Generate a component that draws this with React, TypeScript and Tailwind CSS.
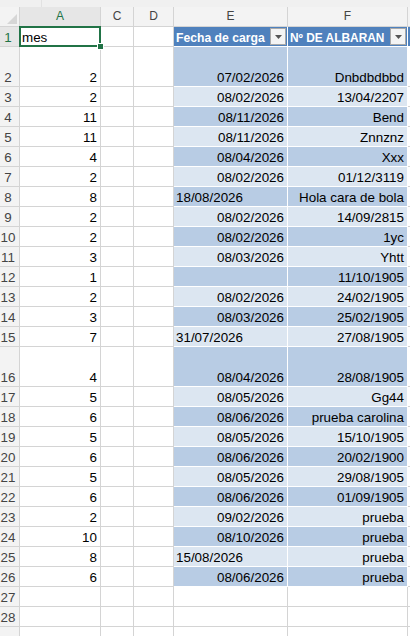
import React from 'react';

type Row = { n: number; a?: string; e?: string; eLeft?: boolean; f?: string; tall?: boolean; hideLabel?: boolean };

const rows: Row[] = [
  { n: 2, a: '2', e: '07/02/2026', f: 'Dnbdbdbbd', tall: true },
  { n: 3, a: '2', e: '08/02/2026', f: '13/04/2207' },
  { n: 4, a: '11', e: '08/11/2026', f: 'Bend' },
  { n: 5, a: '11', e: '08/11/2026', f: 'Znnznz' },
  { n: 6, a: '4', e: '08/04/2026', f: 'Xxx' },
  { n: 7, a: '2', e: '08/02/2026', f: '01/12/3119' },
  { n: 8, a: '8', e: '18/08/2026', eLeft: true, f: 'Hola cara de bola' },
  { n: 9, a: '2', e: '08/02/2026', f: '14/09/2815' },
  { n: 10, a: '2', e: '08/02/2026', f: '1yc' },
  { n: 11, a: '3', e: '08/03/2026', f: 'Yhtt' },
  { n: 12, a: '1', e: '', f: '11/10/1905' },
  { n: 13, a: '2', e: '08/02/2026', f: '24/02/1905' },
  { n: 14, a: '3', e: '08/03/2026', f: '25/02/1905' },
  { n: 15, a: '7', e: '31/07/2026', eLeft: true, f: '27/08/1905' },
  { n: 16, a: '4', e: '08/04/2026', f: '28/08/1905', tall: true },
  { n: 17, a: '5', e: '08/05/2026', f: 'Gg44' },
  { n: 18, a: '6', e: '08/06/2026', f: 'prueba carolina' },
  { n: 19, a: '5', e: '08/05/2026', f: '15/10/1905' },
  { n: 20, a: '6', e: '08/06/2026', f: '20/02/1900' },
  { n: 21, a: '5', e: '08/05/2026', f: '29/08/1905' },
  { n: 22, a: '6', e: '08/06/2026', f: '01/09/1905' },
  { n: 23, a: '2', e: '09/02/2026', f: 'prueba' },
  { n: 24, a: '10', e: '08/10/2026', f: 'prueba' },
  { n: 25, a: '8', e: '15/08/2026', eLeft: true, f: 'prueba' },
  { n: 26, a: '6', e: '08/06/2026', f: 'prueba' },
  { n: 27 },
  { n: 28 },
  // row 29 is only a sliver at the bottom edge, its number is off screen
  { n: 29, hideLabel: true },
];

const FilterButton = () => (
  <div className="ml-auto mr-[1px] mb-[1px] w-[16px] h-[17px] shrink-0 flex items-center justify-center bg-[#f4f4f4] border border-[#a9a9a9]">
    <svg width="7" height="4" viewBox="0 0 7 4">
      <path d="M0 0 L7 0 L3.5 4 Z" fill="#555" />
    </svg>
  </div>
);

const BodyRow = ({ r }: { r: Row }) => {
  const inTable = r.n >= 2 && r.n <= 26;
  const band = r.n % 2 === 0 ? 'bg-[#b8cce4]' : 'bg-[#dce6f1]';
  const tableCell = inTable ? `${band} border-white` : 'border-[#d4d4d4]';
  return (
    <div className={`flex shrink-0 ${r.tall ? 'h-[40px]' : 'h-[20px]'}`}>
      <div className="w-[20px] shrink-0 flex items-end justify-center pr-[3px] bg-[#f3f3f3] border-r border-b border-[#d4d4d4] text-[#444]">
        {r.hideLabel ? '' : r.n}
      </div>
      <div className="w-[81px] shrink-0 flex items-end justify-end pr-[3px] border-r border-b border-[#d4d4d4]">{r.a}</div>
      <div className="w-[33px] shrink-0 border-r border-b border-[#d4d4d4]" />
      <div className="w-[40px] shrink-0 border-r border-b border-[#d4d4d4]" />
      <div
        className={`w-[114px] shrink-0 flex items-end border-r border-b ${tableCell} ${
          r.eLeft ? 'justify-start pl-[2px]' : 'justify-end pr-[3px]'
        }`}
      >
        {r.e}
      </div>
      <div className={`w-[120px] shrink-0 flex items-end justify-end pr-[3px] border-r border-b ${tableCell}`}>{r.f}</div>
      <div className="flex-1 border-b border-[#d4d4d4]" />
    </div>
  );
};

export default function App() {
  return (
    <div className="w-[410px] h-[636px] overflow-hidden bg-white flex flex-col font-['Liberation_Sans',Arial,sans-serif] text-[13.4px] leading-[16px] text-black">
      {/* formula bar edge */}
      <div className="h-[7px] shrink-0 flex bg-[#f0f0f0]">
        <div className="w-[42px] border-r border-[#e2e2e2]" />
        <div className="flex-1" />
      </div>

      {/* column headers */}
      <div className="flex h-[20px] shrink-0 bg-[#f3f3f3] text-[12px] text-[#444]">
        <div className="w-[20px] shrink-0 flex items-end justify-end border-r border-b border-[#d4d4d4] p-[2px]">
          <svg width="10" height="10" viewBox="0 0 10 10">
            <path d="M10 0 L10 10 L0 10 Z" fill="#d6d6d6" />
          </svg>
        </div>
        <div className="w-[81px] shrink-0 flex items-end justify-center pb-[2px] bg-[#e6e6e6] border-r border-b border-[#d4d4d4] text-[#217346]">A</div>
        <div className="w-[33px] shrink-0 flex items-end justify-center pb-[2px] border-r border-b border-[#d4d4d4]">C</div>
        <div className="w-[40px] shrink-0 flex items-end justify-center pb-[2px] border-r border-b border-[#d4d4d4]">D</div>
        <div className="w-[114px] shrink-0 flex items-end justify-center pb-[2px] border-r border-b border-[#d4d4d4]">E</div>
        <div className="w-[120px] shrink-0 flex items-end justify-center pb-[2px] border-r border-b border-[#d4d4d4]">F</div>
        <div className="flex-1 border-b border-[#d4d4d4]" />
      </div>

      {/* row 1: table header */}
      <div className="flex h-[20px] shrink-0">
        <div className="w-[20px] shrink-0 flex items-end justify-center pr-[3px] bg-[#e6e6e6] border-r border-b border-[#d4d4d4] text-[#217346]">
          1
        </div>
        <div className="relative w-[81px] shrink-0 flex items-end pl-[2px] border-r border-b border-[#d4d4d4]">
          mes
          <div className="absolute left-[-1px] top-[-1px] w-[82px] h-[21px] border-2 border-[#217346]" />
          <div className="absolute right-[-4px] bottom-[-4px] w-[7px] h-[7px] bg-[#217346] border border-white" />
        </div>
        <div className="w-[33px] shrink-0 border-r border-b border-[#d4d4d4]" />
        <div className="w-[40px] shrink-0 border-r border-b border-[#d4d4d4]" />
        <div className="w-[114px] shrink-0 flex items-end pl-[2px] bg-[#4f81bd] border-r border-b border-white text-white font-bold text-[12.2px]">
          <span className="whitespace-nowrap">Fecha de carga</span>
          <FilterButton />
        </div>
        <div className="w-[120px] shrink-0 flex items-end pl-[2px] bg-[#4f81bd] border-r border-b border-white text-white font-bold text-[11.9px]">
          <span className="whitespace-nowrap">Nº DE ALBARAN</span>
          <FilterButton />
        </div>
        <div className="flex-1 bg-[#4f81bd] border-b border-white" />
      </div>

      {rows.map((r) => (
        <BodyRow key={r.n} r={r} />
      ))}
    </div>
  );
}
